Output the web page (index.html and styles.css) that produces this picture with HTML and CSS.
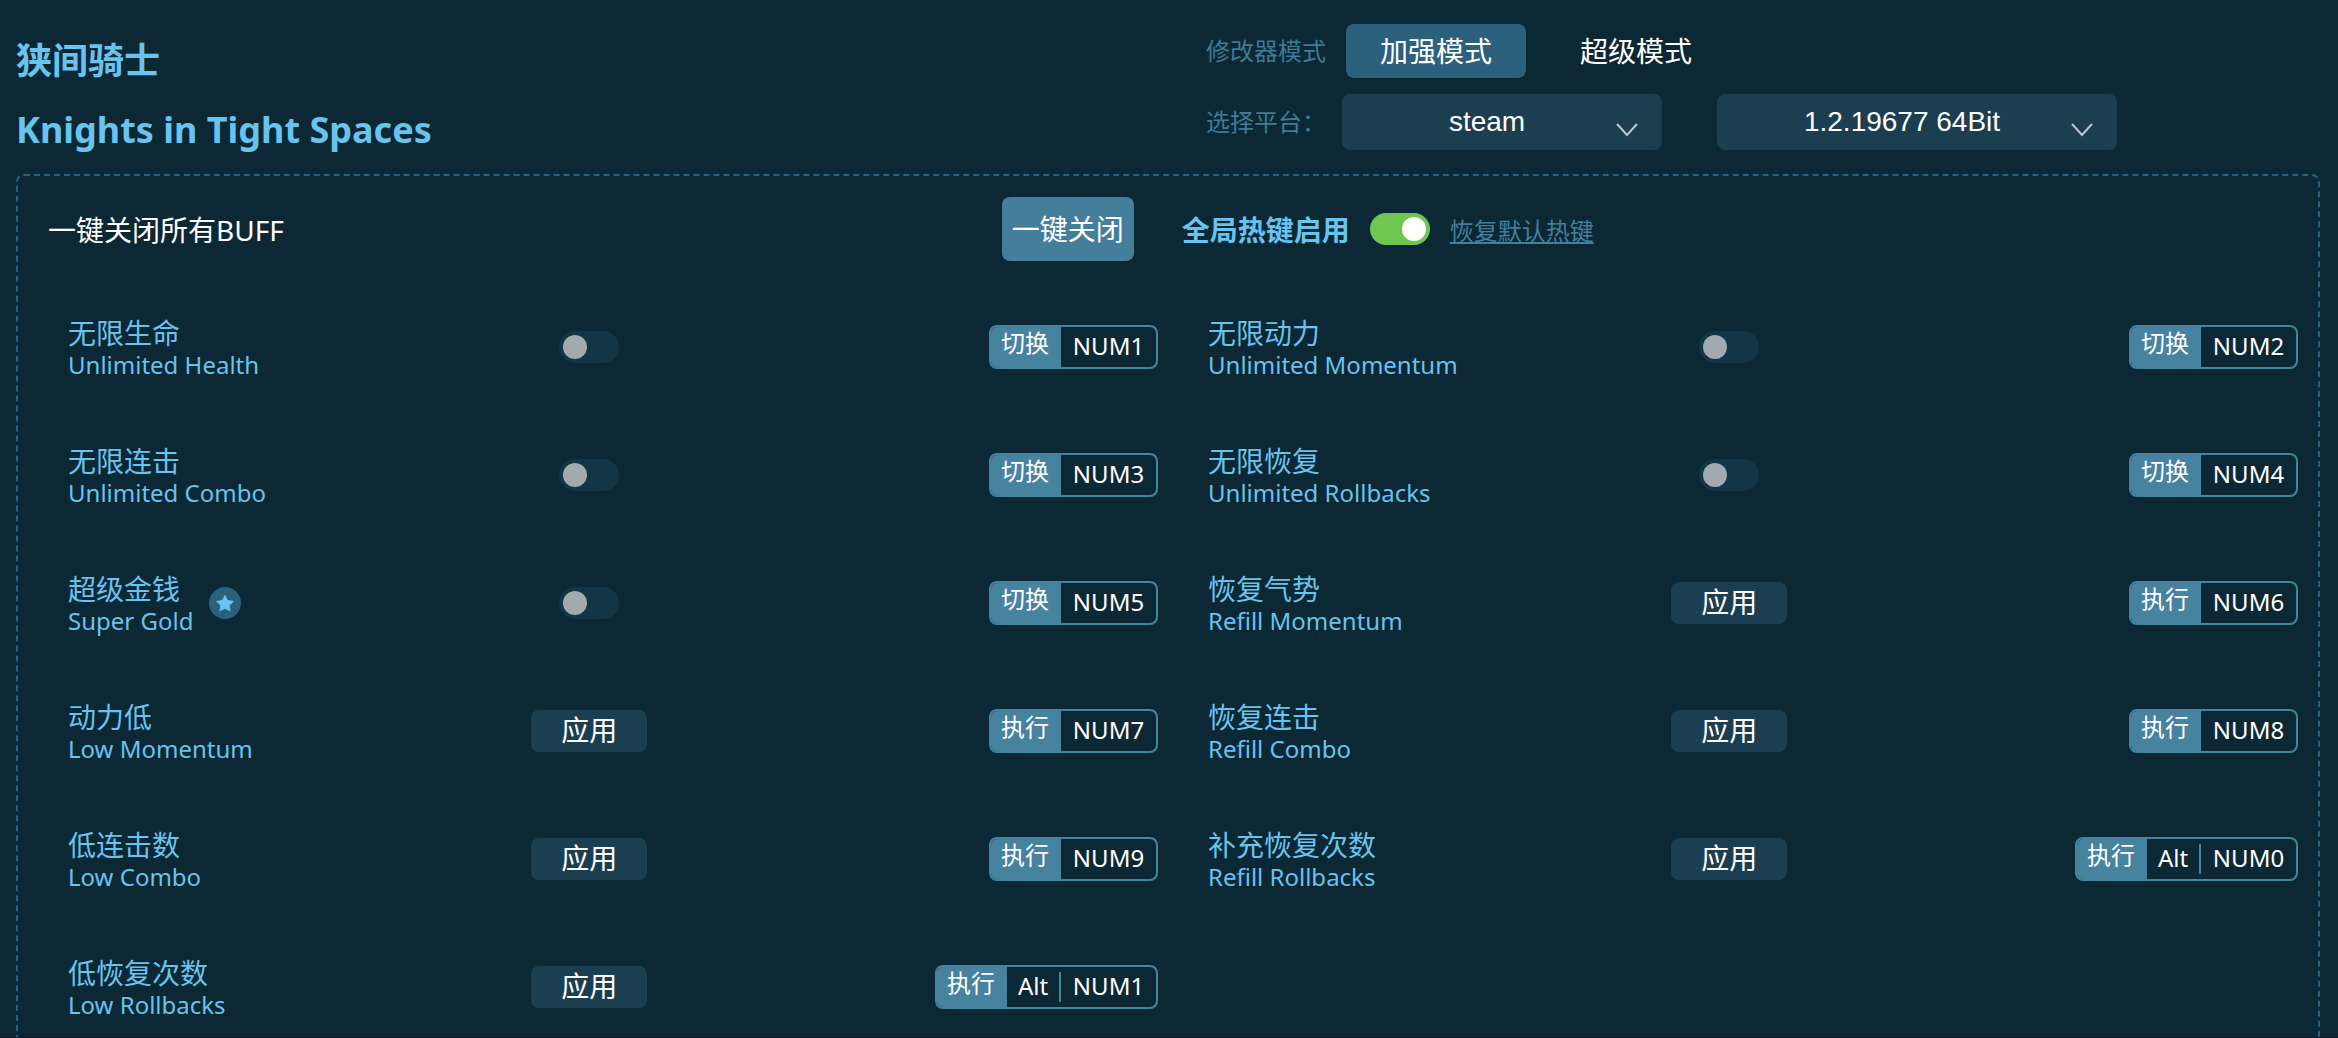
FILE: index.html
```html
<!DOCTYPE html>
<html lang="zh-CN">
<head>
    <meta charset="UTF-8">
    <meta name="viewport" content="width=device-width, initial-scale=1.0">
    <title>狭间骑士 Knights in Tight Spaces</title>
    <link rel="stylesheet" href="styles.css">
</head>
<body>
<div class="app">
    <header class="header">
        <div class="titles">
            <h1 class="title">狭间骑士</h1>
            <h2 class="title">Knights in Tight Spaces</h2>
        </div>
        <div class="settings">
            <div class="mode-row">
                <span class="hint">修改器模式</span>
                <button type="button" class="tab active">加强模式</button>
                <button type="button" class="tab">超级模式</button>
            </div>
            <div class="platform-row">
                <label class="hint" for="platform">选择平台：</label>
                <div class="select-box">
                    <select id="platform">
                        <option>steam</option>
                    </select>
                    <svg class="arrow" viewBox="0 0 22 14"><path d="M1 1l10 11L21 1"/></svg>
                </div>
                <div class="select-box wide">
                    <select id="version" aria-label="版本">
                        <option>1.2.19677 64Bit</option>
                    </select>
                    <svg class="arrow" viewBox="0 0 22 14"><path d="M1 1l10 11L21 1"/></svg>
                </div>
            </div>
        </div>
    </header>

    <main class="panel">
        <div class="toolbar">
            <span class="toolbar-name">一键关闭所有BUFF</span>
            <button type="button" class="close-all">一键关闭</button>
            <label class="hotkey-label" for="hotkeys">全局热键启用</label>
            <input type="checkbox" class="switch" id="hotkeys" checked>
            <a class="reset" href="#">恢复默认热键</a>
        </div>

        <div class="cheats">
            <div class="cheat">
                <label class="name" for="health"><span class="zh">无限生命</span><span class="en">Unlimited Health</span></label>
                <div class="control"><input type="checkbox" class="switch" id="health"></div>
                <div class="hotkey"><span class="tag">切换</span><span class="key">NUM1</span></div>
            </div>
            <div class="cheat">
                <label class="name" for="momentum"><span class="zh">无限动力</span><span class="en">Unlimited Momentum</span></label>
                <div class="control"><input type="checkbox" class="switch" id="momentum"></div>
                <div class="hotkey"><span class="tag">切换</span><span class="key">NUM2</span></div>
            </div>
            <div class="cheat">
                <label class="name" for="combo"><span class="zh">无限连击</span><span class="en">Unlimited Combo</span></label>
                <div class="control"><input type="checkbox" class="switch" id="combo"></div>
                <div class="hotkey"><span class="tag">切换</span><span class="key">NUM3</span></div>
            </div>
            <div class="cheat">
                <label class="name" for="rollbacks"><span class="zh">无限恢复</span><span class="en">Unlimited Rollbacks</span></label>
                <div class="control"><input type="checkbox" class="switch" id="rollbacks"></div>
                <div class="hotkey"><span class="tag">切换</span><span class="key">NUM4</span></div>
            </div>
            <div class="cheat">
                <div class="name-box">
                    <label class="name" for="gold"><span class="zh">超级金钱</span><span class="en">Super Gold</span></label>
                    <svg class="star" viewBox="0 0 32 32">
                        <circle cx="16" cy="16" r="16"/>
                        <path d="M16 7.500l2.800 5.500 6.200 1-4.400 4.400 1 6.100-5.600-2.800-5.600 2.800 1-6.100L7 14l6.200-1z"/>
                    </svg>
                </div>
                <div class="control"><input type="checkbox" class="switch" id="gold"></div>
                <div class="hotkey"><span class="tag">切换</span><span class="key">NUM5</span></div>
            </div>
            <div class="cheat">
                <div class="name"><span class="zh">恢复气势</span><span class="en">Refill Momentum</span></div>
                <div class="control"><button type="button" class="apply">应用</button></div>
                <div class="hotkey"><span class="tag">执行</span><span class="key">NUM6</span></div>
            </div>
            <div class="cheat">
                <div class="name"><span class="zh">动力低</span><span class="en">Low Momentum</span></div>
                <div class="control"><button type="button" class="apply">应用</button></div>
                <div class="hotkey"><span class="tag">执行</span><span class="key">NUM7</span></div>
            </div>
            <div class="cheat">
                <div class="name"><span class="zh">恢复连击</span><span class="en">Refill Combo</span></div>
                <div class="control"><button type="button" class="apply">应用</button></div>
                <div class="hotkey"><span class="tag">执行</span><span class="key">NUM8</span></div>
            </div>
            <div class="cheat">
                <div class="name"><span class="zh">低连击数</span><span class="en">Low Combo</span></div>
                <div class="control"><button type="button" class="apply">应用</button></div>
                <div class="hotkey"><span class="tag">执行</span><span class="key">NUM9</span></div>
            </div>
            <div class="cheat">
                <div class="name"><span class="zh">补充恢复次数</span><span class="en">Refill Rollbacks</span></div>
                <div class="control"><button type="button" class="apply">应用</button></div>
                <div class="hotkey"><span class="tag">执行</span><span class="mod">Alt</span><span class="key">NUM0</span></div>
            </div>
            <div class="cheat">
                <div class="name"><span class="zh">低恢复次数</span><span class="en">Low Rollbacks</span></div>
                <div class="control"><button type="button" class="apply">应用</button></div>
                <div class="hotkey"><span class="tag">执行</span><span class="mod">Alt</span><span class="key">NUM1</span></div>
            </div>
        </div>
    </main>
</div>
</body>
</html>
```
FILE: styles.css
```css
* {
    box-sizing: border-box;
}
body {
    margin: 0;
    background-color: #0c2834;
    color: #fff;
    font-family: "Noto Sans", "Noto Sans CJK SC", sans-serif;
    font-size: 28px;
}
button {
    border: none;
    border-radius: 8px;
    color: #fff;
    font-family: inherit;
    font-size: 28px;
    line-height: 40px;
    padding: 0;
    cursor: pointer;
}
.app {
    height: 100vh;
    padding: 24px 18px 0 16px;
    overflow: hidden;
    border-bottom: 1px solid #0b1a2a;
}

/* header */
.header {
    display: flex;
    height: 150px;
}
.titles {
    width: 51.65%;
    padding-top: 2px;
}
.title {
    margin: 0;
    color: #68c3ee;
    font-size: 36px;
    font-weight: bold;
    line-height: 69px;
}
.mode-row,
.platform-row {
    display: flex;
    align-items: center;
}
.mode-row {
    height: 54px;
    margin-bottom: 16px;
}
.hint {
    width: 136px;
    padding-bottom: 3px;
    color: #3f7b96;
    font-size: 24px;
}
.mode-row .hint {
    width: 140px;
}
.tab {
    width: 180px;
    height: 54px;
    margin-right: 20px;
    background: none;
}
.tab.active {
    background-color: #2b617d;
}
.select-box {
    position: relative;
    width: 320px;
    margin-right: 55px;
}
.select-box.wide {
    width: 400px;
    margin-right: 0;
}
.select-box select {
    display: block;
    width: 100%;
    height: 56px;
    padding: 0 30px 2px 0;
    border: none;
    border-radius: 8px;
    background-color: #1b3e50;
    color: #fff;
    font-family: "Liberation Sans", Arial, sans-serif;
    font-size: 28px;
    text-align: center;
    text-align-last: center;
    appearance: none;
}
.arrow {
    position: absolute;
    right: 24px;
    bottom: 13px;
    width: 22px;
    height: 14px;
    fill: none;
    stroke: #c0c4cc;
    stroke-width: 2;
    pointer-events: none;
}

/* main box */
.panel {
    border: 2px dashed #2b617d;
    border-radius: 8px;
    padding: 21px 10px 40px;
}
.toolbar {
    display: flex;
    align-items: center;
    height: 64px;
    padding-left: 20px;
}
.toolbar-name {
    width: 42.2%;
}
.close-all {
    width: 132px;
    height: 64px;
    margin-right: 48px;
    background-color: #447e9a;
}
.hotkey-label {
    margin-right: 20px;
    color: #68c3ee;
    font-weight: bold;
}
.reset {
    margin-left: 20px;
    color: #447e9a;
    font-size: 24px;
}

/* toggle */
.switch {
    appearance: none;
    display: block;
    width: 60px;
    height: 32px;
    margin: 0;
    padding: 4px;
    border-radius: 16px;
    background-color: #143546;
    cursor: pointer;
}
.switch::before {
    content: "";
    display: block;
    width: 24px;
    height: 24px;
    border-radius: 50%;
    background-color: #a1abaf;
}
.switch:checked {
    background-color: #6fc751;
}
.switch:checked::before {
    margin-left: auto;
    background-color: #fff;
}

/* cheat list */
.cheats {
    display: grid;
    grid-template-columns: 1fr 1fr;
    padding-top: 22px;
}
.cheat {
    display: grid;
    grid-template-columns: 42.5% 116px 1fr;
    align-items: center;
    height: 128px;
    padding: 0 10px 0 40px;
}
.name-box {
    display: flex;
    align-items: center;
    gap: 16px;
}
.name {
    padding-top: 4px;
    color: #68c3ee;
}
.zh,
.en {
    display: block;
    line-height: 32px;
}
.en {
    font-size: 24px;
}
.star {
    width: 32px;
    height: 32px;
}
.star circle {
    fill: #2b617d;
}
.star path {
    fill: #68c3ee;
}
.control {
    display: flex;
    justify-content: center;
}
.apply {
    width: 116px;
    height: 42px;
    padding-bottom: 2px;
    background-color: #1b3e50;
}
.hotkey {
    display: flex;
    align-items: center;
    justify-self: end;
    height: 44px;
    border: 2px solid #47829f;
    border-radius: 8px;
    font-size: 24px;
    overflow: hidden;
}
.tag {
    height: 40px;
    padding: 0 12px 0 10px;
    background-color: #47829f;
    line-height: 32px;
}
.key,
.mod {
    line-height: 28px;
    padding-bottom: 2px;
    text-align: center;
}
.key {
    min-width: 95px;
}
.mod {
    min-width: 54px;
    border-right: 2px solid #47829f;
}
```
